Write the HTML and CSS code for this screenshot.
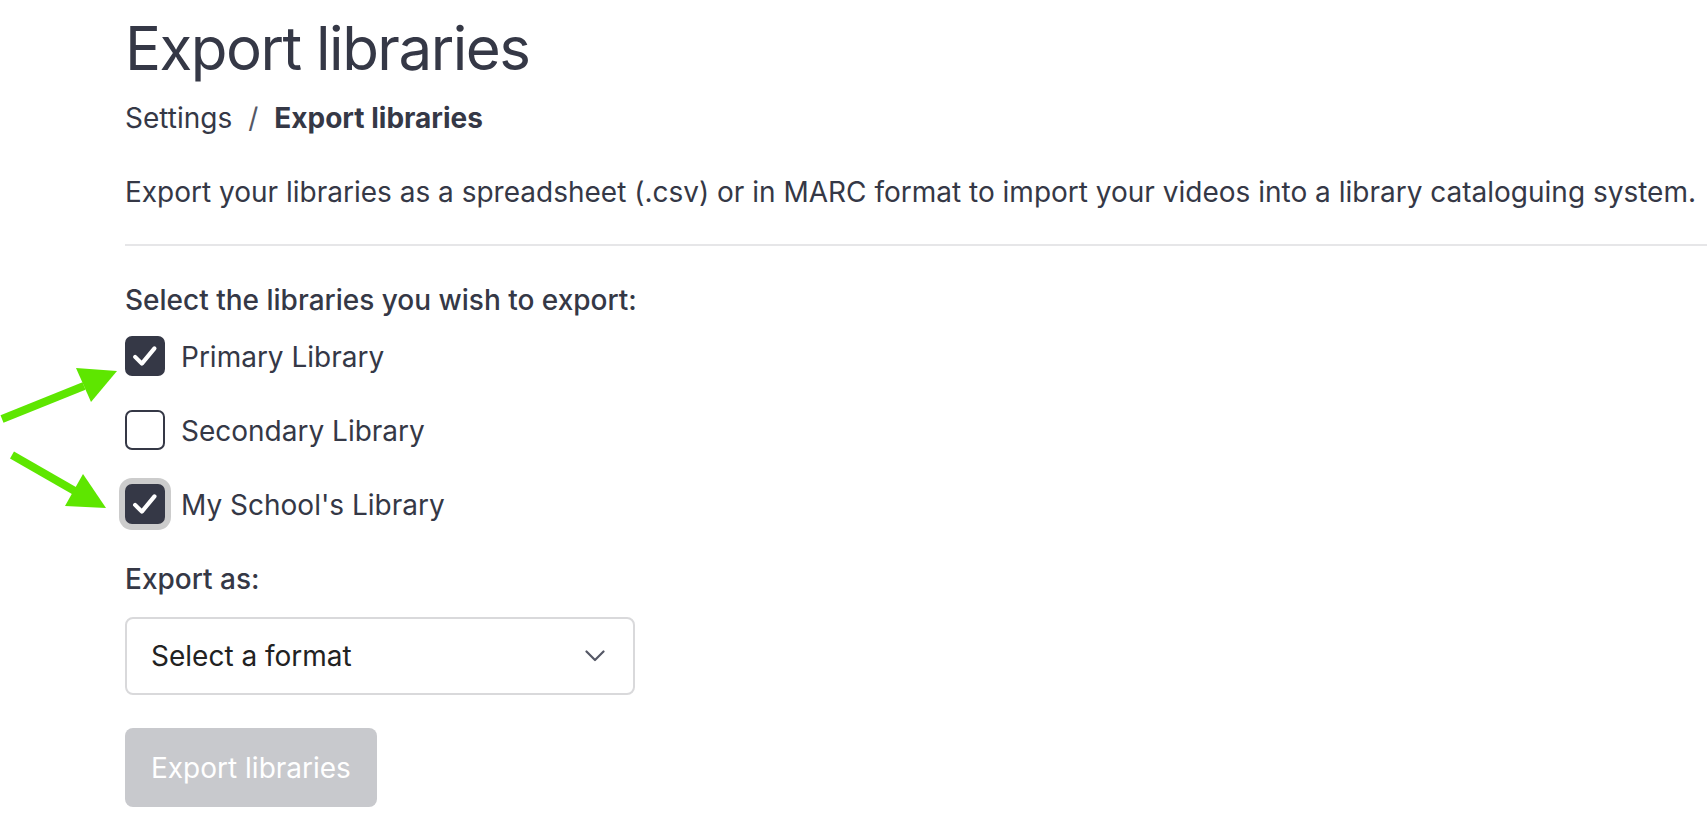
FILE: index.html
```html
<!DOCTYPE html>
<html lang="en">
<head>
<meta charset="utf-8">
<title>Export libraries</title>
<link rel="stylesheet" href="styles.css">
</head>
<body>
<main class="page">
  <h1 class="title">Export libraries</h1>
  <nav class="crumbs"><span>Settings</span><span class="sep">/</span><strong>Export libraries</strong></nav>
  <p class="desc">Export your libraries as a spreadsheet (.csv) or in MARC format to import your videos into a library cataloguing system.</p>
  <hr class="rule">
  <div class="field-label">Select the libraries you wish to export:</div>
  <ul class="options">
    <li class="option">
      <span class="box checked"><svg viewBox="0 0 40 40"><path d="M9 21 L16.5 28.5 L30.5 11.5"/></svg></span>
      <span>Primary Library</span>
    </li>
    <li class="option">
      <span class="box"></span>
      <span>Secondary Library</span>
    </li>
    <li class="option">
      <span class="box checked focused"><svg viewBox="0 0 40 40"><path d="M9 21 L16.5 28.5 L30.5 11.5"/></svg></span>
      <span>My School's Library</span>
    </li>
  </ul>
  <div class="field-label plain">Export as:</div>
  <div class="select">
    <span>Select a format</span>
    <svg class="chev" viewBox="0 0 20 12"><path d="M1.5 1.5 L10 10 L18.5 1.5"/></svg>
  </div>
  <div class="btn">Export libraries</div>
</main>
<svg class="arrows" viewBox="0 0 1707 826" width="1707" height="826">
  <line x1="2" y1="419" x2="84" y2="386" class="shaft"/>
  <polygon points="117,371 76,368 91,402" class="head"/>
  <line x1="12" y1="455" x2="80" y2="494" class="shaft"/>
  <polygon points="106,508 83,474 65,506" class="head"/>
</svg>
</body>
</html>
```
FILE: styles.css
```css
html, body {
  margin: 0;
  padding: 0;
  background: #ffffff;
}
body {
  font-family: Inter, "Noto Sans", sans-serif;
  color: #353846;
  position: relative;
  width: 1707px;
  height: 826px;
  overflow: hidden;
}
.page {
  padding-left: 125px;
  padding-top: 12px;
  font-size: 28px;
  line-height: 40px;
}
.title {
  margin: 0;
  font-size: 60px;
  line-height: 72px;
  font-weight: 400;
  letter-spacing: -1.5px;
}
.crumbs {
  margin-top: 14px;
  display: flex;
  align-items: baseline;
}
.crumbs .sep {
  margin: 0 16px;
  color: #555866;
}
.crumbs strong {
  font-weight: 700;
}
.desc {
  margin: 34px 0 0;
}
.rule {
  margin: 32px 0 0;
  border: 0;
  height: 2px;
  background: #e6e6e8;
}
.field-label {
  margin-top: 34px;
  font-weight: 500;
}
.field-label.plain {
  margin-top: 35px;
}
.options {
  list-style: none;
  margin: 16px 0 0;
  padding: 0;
  display: flex;
  flex-direction: column;
  gap: 34px;
}
.option {
  display: flex;
  align-items: center;
  gap: 16px;
  height: 40px;
}
.option > span:last-child {
  padding-top: 2px;
}
.box {
  width: 40px;
  height: 40px;
  box-sizing: border-box;
  border: 2px solid #353846;
  border-radius: 7px;
  background: #fff;
  display: flex;
}
.box.checked {
  background: #353846;
}
.box.focused {
  box-shadow: 0 0 0 6px #cccccc;
}
.box svg {
  width: 36px;
  height: 36px;
}
.box svg path {
  fill: none;
  stroke: #ffffff;
  stroke-width: 4.6;
  stroke-linecap: round;
  stroke-linejoin: round;
}
.select {
  margin-top: 18px;
  width: 510px;
  height: 78px;
  box-sizing: border-box;
  border: 2px solid #d9d9db;
  border-radius: 8px;
  display: flex;
  align-items: center;
  justify-content: space-between;
  padding: 0 28px 0 24px;
  color: #222222;
}
.chev {
  width: 20px;
  height: 12px;
}
.chev path {
  fill: none;
  stroke: #555866;
  stroke-width: 2.2;
  stroke-linecap: round;
  stroke-linejoin: round;
}
.btn {
  margin-top: 33px;
  display: inline-flex;
  align-items: center;
  height: 79px;
  padding: 0 26px;
  border-radius: 8px;
  background: #c8c9cd;
  color: #ffffff;
}
.arrows {
  position: absolute;
  left: 0;
  top: 0;
  pointer-events: none;
}
.shaft {
  stroke: #5ee600;
  stroke-width: 8;
}
.head {
  fill: #5ee600;
}
```
